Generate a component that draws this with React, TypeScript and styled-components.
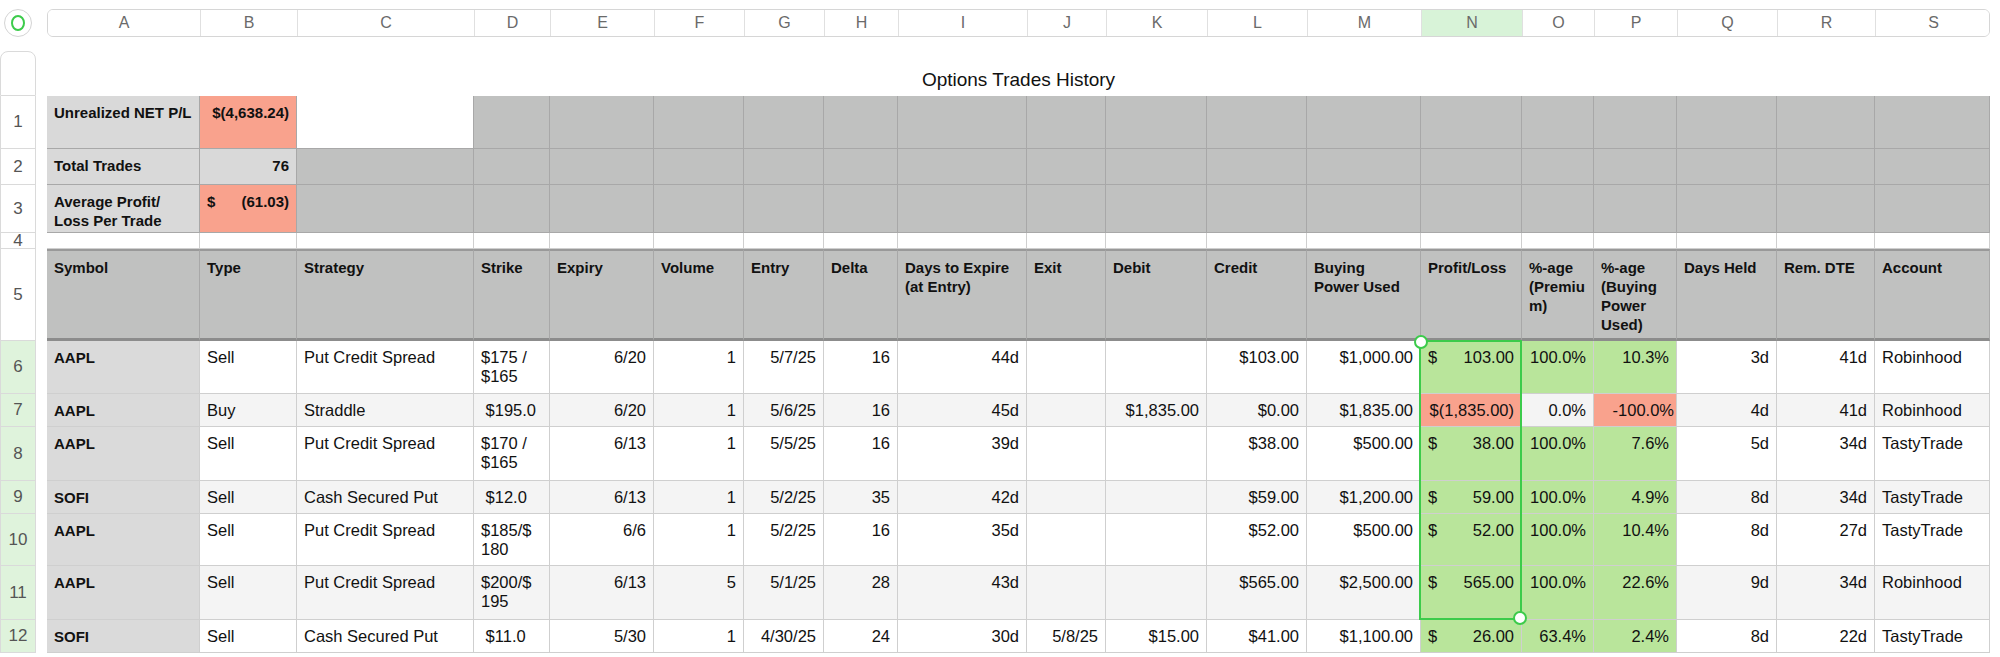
import React from "react";
import styled, { createGlobalStyle } from "styled-components";

const Global = createGlobalStyle`
  body { margin: 0; background: #fff; font-family: "Liberation Sans", Arial, sans-serif; }
`;

const widths = [153, 97, 177, 76, 104, 90, 80, 74, 129, 79, 101, 100, 114, 101, 72, 83, 100, 98, 115];
const cols = `36px 11px ${widths.map((w) => w + "px").join(" ")}`;
const letters = "ABCDEFGHIJKLMNOPQRS".split("");

const Page = styled.div`
  width: 2000px;
  height: 657px;
  overflow: hidden;
  padding-top: 9px;
  box-sizing: border-box;
`;
const TopBar = styled.div`
  display: grid;
  grid-template-columns: ${cols};
  height: 28px;
`;
const Corner = styled.div`
  width: 28px;
  height: 28px;
  margin-left: 4px;
  border-radius: 50%;
  border: 1px solid #d4d4d4;
  box-sizing: border-box;
  display: flex;
  align-items: center;
  justify-content: center;
`;
const Ring = styled.div`
  width: 14px;
  height: 16px;
  border-radius: 50%;
  border: 2px solid #3ccb4b;
  box-sizing: border-box;
`;
const ColHeads = styled.div`
  grid-column: 3 / span 19;
  display: grid;
  grid-template-columns: ${widths.map((w) => w + "px").join(" ")};
  border: 1px solid #d6d6d6;
  border-radius: 6px;
  overflow: hidden;
  box-sizing: border-box;
`;
const ColHead = styled.div<{ $sel?: boolean }>`
  display: flex;
  align-items: center;
  justify-content: center;
  font-size: 16px;
  color: #6a6a6a;
  background: ${(p) => (p.$sel ? "#d8f3d8" : "#fff")};
  border-right: 1px solid #e0e0e0;
  &:last-child { border-right: none; }
`;
const Sheet = styled.div`
  margin-top: 14px;
  display: grid;
  grid-template-columns: ${cols};
  grid-template-rows: 45px 53px 36px 48px 16px 92px 53px 33px 54px 33px 52px 54px 33px;
`;
const RowNum = styled.div<{ $sel?: boolean; $first?: boolean; $row: number }>`
  grid-column: 1;
  grid-row: ${(p) => p.$row};
  display: flex;
  align-items: center;
  justify-content: center;
  font-size: 17px;
  color: #555;
  background: ${(p) => (p.$sel ? "#dff3dc" : "#fff")};
  border: 1px solid #dadada;
  border-top: ${(p) => (p.$first ? "1px solid #dadada" : "none")};
  border-radius: ${(p) => (p.$first ? "8px 8px 0 0" : "0")};
  box-sizing: border-box;
`;
const Title = styled.div`
  grid-column: 3 / span 19;
  grid-row: 1;
  display: flex;
  align-items: center;
  justify-content: center;
  padding-top: 12px;
  font-size: 19px;
  color: #111;
`;
const Cell = styled.div<{ $r: number; $c: number; $bg?: string; $align?: string; $bold?: boolean; $dark?: boolean; $thick?: boolean; $top?: boolean }>`
  grid-row: ${(p) => p.$r};
  grid-column: ${(p) => p.$c + 3};
  background: ${(p) => p.$bg || "#fff"};
  text-align: ${(p) => p.$align || "left"};
  font-weight: ${(p) => (p.$bold ? 700 : 400)};
  font-size: ${(p) => (p.$bold ? "15px" : "16.5px")};
  line-height: 19px;
  color: #111;
  padding: 7px 7px 0 7px;
  box-sizing: border-box;
  border-right: 1px solid ${(p) => (p.$dark ? "#a8a8a8" : "#cfcfcf")};
  border-bottom: ${(p) => (p.$thick ? "3px solid #8c8c8c" : `1px solid ${p.$dark ? "#a8a8a8" : "#cfcfcf"}`)};
  border-top: ${(p) => (p.$top ? "2px solid #999" : "none")};
  white-space: normal;
  overflow-wrap: anywhere;
`;
const Acct = styled.div`
  display: flex;
  justify-content: space-between;
  white-space: nowrap;
`;
const Sel = styled.div`
  grid-column: 16;
  grid-row: 7 / span 6;
  border: 2px solid #3ccb4b;
  margin: -1px 0 0 -2px;
  position: relative;
  pointer-events: none;
  z-index: 2;
`;
const Handle = styled.div<{ $pos: "tl" | "br" }>`
  position: absolute;
  width: 10px;
  height: 10px;
  border-radius: 50%;
  background: #fff;
  border: 2px solid #3ccb4b;
  ${(p) => (p.$pos === "tl" ? "top: -7px; left: -7px;" : "bottom: -7px; right: -7px;")}
`;

const GRAY = "#c0c1c0";
const LABEL = "#d9d9d9";
const RED = "#f9a28d";
const GREEN = "#b9e59b";
const STRIPE = "#f4f4f4";

const heads = ["Symbol", "Type", "Strategy", "Strike", "Expiry", "Volume", "Entry", "Delta", "Days to Expire (at Entry)", "Exit", "Debit", "Credit", "Buying Power Used", "Profit/Loss", "%-age (Premiu m)", "%-age (Buying Power Used)", "Days Held", "Rem. DTE", "Account"];

const rows: string[][] = [
  ["AAPL", "Sell", "Put Credit Spread", "$175 / $165", "6/20", "1", "5/7/25", "16", "44d", "", "", "$103.00", "$1,000.00", "103.00", "100.0%", "10.3%", "3d", "41d", "Robinhood"],
  ["AAPL", "Buy", "Straddle", "\u00a0$195.0", "6/20", "1", "5/6/25", "16", "45d", "", "$1,835.00", "$0.00", "$1,835.00", "$(1,835.00)", "0.0%", "-100.0%", "4d", "41d", "Robinhood"],
  ["AAPL", "Sell", "Put Credit Spread", "$170 / $165", "6/13", "1", "5/5/25", "16", "39d", "", "", "$38.00", "$500.00", "38.00", "100.0%", "7.6%", "5d", "34d", "TastyTrade"],
  ["SOFI", "Sell", "Cash Secured Put", "\u00a0$12.0", "6/13", "1", "5/2/25", "35", "42d", "", "", "$59.00", "$1,200.00", "59.00", "100.0%", "4.9%", "8d", "34d", "TastyTrade"],
  ["AAPL", "Sell", "Put Credit Spread", "$185/$ 180", "6/6", "1", "5/2/25", "16", "35d", "", "", "$52.00", "$500.00", "52.00", "100.0%", "10.4%", "8d", "27d", "TastyTrade"],
  ["AAPL", "Sell", "Put Credit Spread", "$200/$ 195", "6/13", "5", "5/1/25", "28", "43d", "", "", "$565.00", "$2,500.00", "565.00", "100.0%", "22.6%", "9d", "34d", "Robinhood"],
  ["SOFI", "Sell", "Cash Secured Put", "\u00a0$11.0", "5/30", "1", "4/30/25", "24", "30d", "5/8/25", "$15.00", "$41.00", "$1,100.00", "26.00", "63.4%", "2.4%", "8d", "22d", "TastyTrade"],
];
const leftCols = new Set([0, 1, 2, 3, 18]);

export default function App() {
  const rowNums = ["", "1", "2", "3", "4", "5", "6", "7", "8", "9", "10", "11", "12"];
  return (
    <Page>
      <Global />
      <TopBar>
        <Corner><Ring /></Corner>
        <div />
        <ColHeads>
          {letters.map((l) => (
            <ColHead key={l} $sel={l === "N"}>{l}</ColHead>
          ))}
        </ColHeads>
      </TopBar>
      <Sheet>
        {rowNums.map((n, i) => (
          <RowNum key={i} $row={i + 1} $first={i === 0} $sel={i >= 6}>{n}</RowNum>
        ))}
        <Title>Options Trades History</Title>
        {/* row 1 */}
        <Cell $r={2} $c={0} $bg={LABEL} $bold $dark>Unrealized NET P/L</Cell>
        <Cell $r={2} $c={1} $bg={RED} $bold $align="right" $dark>$(4,638.24)</Cell>
        <Cell $r={2} $c={2} $dark />
        {widths.slice(3).map((_, i) => <Cell key={"r1" + i} $r={2} $c={i + 3} $bg={GRAY} $dark />)}
        {/* row 2 */}
        <Cell $r={3} $c={0} $bg={LABEL} $bold $dark>Total Trades</Cell>
        <Cell $r={3} $c={1} $bg={LABEL} $bold $align="right" $dark>76</Cell>
        {widths.slice(2).map((_, i) => <Cell key={"r2" + i} $r={3} $c={i + 2} $bg={GRAY} $dark />)}
        {/* row 3 */}
        <Cell $r={4} $c={0} $bg={LABEL} $bold $dark>Average Profit/ Loss Per Trade</Cell>
        <Cell $r={4} $c={1} $bg={RED} $bold $dark><Acct><span>$</span><span>(61.03)</span></Acct></Cell>
        {widths.slice(2).map((_, i) => <Cell key={"r3" + i} $r={4} $c={i + 2} $bg={GRAY} $dark />)}
        {/* row 4 */}
        {widths.map((_, i) => <Cell key={"r4" + i} $r={5} $c={i} />)}
        {/* row 5 headers */}
        {heads.map((h, i) => (
          <Cell key={"h" + i} $r={6} $c={i} $bg={GRAY} $bold $dark $thick $top>{h}</Cell>
        ))}
        {/* data */}
        {rows.map((r, ri) => {
          const stripe = ri % 2 === 1 ? STRIPE : "#fff";
          return r.map((v, ci) => {
            let bg = stripe;
            if (ci === 0) bg = "#dadada";
            const neg = v.startsWith("$(") || v.startsWith("-");
            if (ci >= 13 && ci <= 15) {
              if (neg) bg = RED;
              else if (!(ci === 14 && v === "0.0%")) bg = GREEN;
            }
            const content =
              ci === 13 && !neg ? (
                <Acct><span>$</span><span>{v}</span></Acct>
              ) : (
                v
              );
            return (
              <Cell
                key={`d${ri}-${ci}`}
                $r={ri + 7}
                $c={ci}
                $bg={bg}
                $bold={ci === 0}
                $align={leftCols.has(ci) ? "left" : "right"}
                style={ci === 15 && neg ? { paddingLeft: 2, paddingRight: 2 } : undefined}
              >
                {content}
              </Cell>
            );
          });
        })}
        <Sel>
          <Handle $pos="tl" />
          <Handle $pos="br" />
        </Sel>
      </Sheet>
    </Page>
  );
}
